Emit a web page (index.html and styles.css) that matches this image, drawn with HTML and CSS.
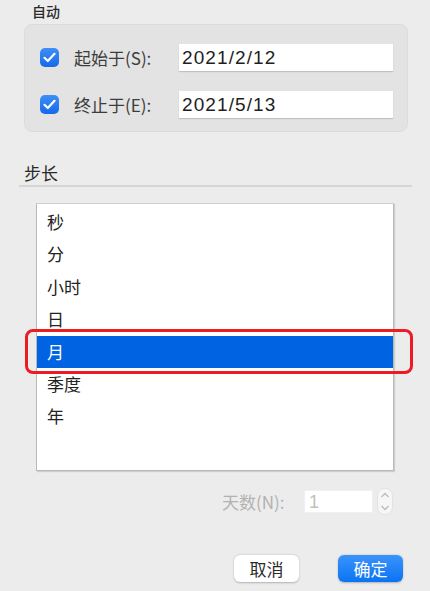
FILE: index.html
```html
<!DOCTYPE html>
<html lang="zh-CN">
<head>
    <meta charset="UTF-8">
    <title>分组</title>
    <link rel="stylesheet" href="styles.css">
</head>
<body>
    <div class="dialog">
        <div class="section-title auto-title">自动</div>
        <div class="group">
            <div class="row">
                <span class="check">
                    <svg width="13" height="11" viewBox="0 0 13 11"><path d="M1.5 5.8 L4.8 9 L11.5 1.8" fill="none" stroke="#fff" stroke-width="2.2" stroke-linecap="round" stroke-linejoin="round"/></svg>
                </span>
                <label>起始于(S):</label>
                <div class="field">2021/2/12</div>
            </div>
            <div class="row">
                <span class="check">
                    <svg width="13" height="11" viewBox="0 0 13 11"><path d="M1.5 5.8 L4.8 9 L11.5 1.8" fill="none" stroke="#fff" stroke-width="2.2" stroke-linecap="round" stroke-linejoin="round"/></svg>
                </span>
                <label>终止于(E):</label>
                <div class="field">2021/5/13</div>
            </div>
        </div>

        <div class="section-title step-title">步长</div>
        <div class="divider"></div>

        <div class="list">
            <div class="item">秒</div>
            <div class="item">分</div>
            <div class="item">小时</div>
            <div class="item">日</div>
            <div class="item selected">月<span class="mark"></span></div>
            <div class="item">季度</div>
            <div class="item">年</div>
        </div>

        <div class="days">
            <label>天数(N):</label>
            <div class="num">1</div>
            <div class="stepper">
                <svg width="16" height="27" viewBox="0 0 16 27">
                    <rect x="0.5" y="0.5" width="15" height="26" rx="7" fill="#f6f6f6" stroke="#e2e2e2"/>
                    <path d="M4.5 9 L8 5.5 L11.5 9" fill="none" stroke="#bdbdbd" stroke-width="1.4"/>
                    <path d="M4.5 18 L8 21.5 L11.5 18" fill="none" stroke="#bdbdbd" stroke-width="1.4"/>
                </svg>
            </div>
        </div>

        <div class="buttons">
            <button class="btn">取消</button>
            <button class="btn primary">确定</button>
        </div>
    </div>
</body>
</html>
```

FILE: styles.css
```css
body {
    margin: 0;
    background-color: #ececec;
    font-family: "Noto Sans CJK SC", "Liberation Sans", sans-serif;
    color: #262626;
}
.dialog {
    width: 430px;
    height: 591px;
    overflow: hidden;
}
.section-title {
    font-size: 14px;
    line-height: 20px;
    color: #2a2a2a;
}
.auto-title {
    padding: 1px 0 0 32px;
    font-weight: 500;
}
.group {
    margin: 3px 0 0 24px;
    width: 384px;
    box-sizing: border-box;
    padding: 19px 14px 13px 15px;
    background-color: #e3e3e3;
    border: 1px solid #dcdcdc;
    border-radius: 8px;
    display: flex;
    flex-direction: column;
    gap: 20px;
}
.row {
    display: flex;
    align-items: center;
    height: 27px;
}
.check {
    width: 19px;
    height: 19px;
    border-radius: 5px;
    background: linear-gradient(#3f8ff7, #1569e8);
    display: flex;
    align-items: center;
    justify-content: center;
}
.row label {
    font-size: 17px;
    color: #3c3c3c;
    margin-left: 15px;
    width: 105px;
}
.field {
    flex: 1;
    height: 27px;
    background: #fff;
    box-shadow: 0 1px 1px rgba(0,0,0,0.15);
    font-family: "Liberation Sans", sans-serif;
    font-size: 19px;
    letter-spacing: 1.1px;
    line-height: 27px;
    padding-left: 3px;
    color: #1e1e1e;
}
.step-title {
    margin: 31px 0 0 24px;
    font-size: 17px;
}
.divider {
    margin: 2px 18px 0 19px;
    height: 2px;
    background-color: #d6d6d6;
}
.list {
    margin: 16px 0 0 36px;
    width: 358px;
    height: 268px;
    box-sizing: border-box;
    background: #fff;
    border: 1px solid #b9b9b9;
    border-top-color: #cfcfcf;
    box-shadow: 1px 1px 1px rgba(0,0,0,0.12);
    padding-top: 2px;
}
.item {
    height: 32.4px;
    line-height: 32.4px;
    padding-left: 10px;
    font-size: 17px;
    color: #222;
    position: relative;
}
.item.selected {
    background-color: #0063e1;
    color: #fff;
}
.mark {
    position: absolute;
    left: -12px;
    right: -20px;
    top: -7px;
    bottom: -6px;
    border: 3px solid #ec1b24;
    border-radius: 8px;
}
.days {
    display: flex;
    align-items: center;
    margin: 17px 0 0 222px;
    height: 27px;
}
.days label {
    font-size: 17px;
    color: #b2b2b2;
    width: 82px;
}
.num {
    width: 69px;
    height: 23px;
    background: #fff;
    border: 1px solid #f0f0f0;
    box-sizing: border-box;
    font-family: "Liberation Sans", sans-serif;
    font-size: 18px;
    line-height: 22px;
    padding-left: 4px;
    color: #c0c0c0;
}
.stepper {
    margin-left: 4px;
    height: 27px;
}
.buttons {
    display: flex;
    gap: 39px;
    margin: 40px 0 0 234px;
}
.btn {
    width: 65px;
    height: 27px;
    border: none;
    border-radius: 6px;
    background: #fff;
    box-shadow: 0 0.5px 2px rgba(0,0,0,0.25);
    font-family: "Noto Sans CJK SC", sans-serif;
    font-size: 17px;
    color: #2a2a2a;
    padding: 0;
}
.btn.primary {
    background: linear-gradient(#3b93fb, #0a74f4);
    color: #fff;
}
```
